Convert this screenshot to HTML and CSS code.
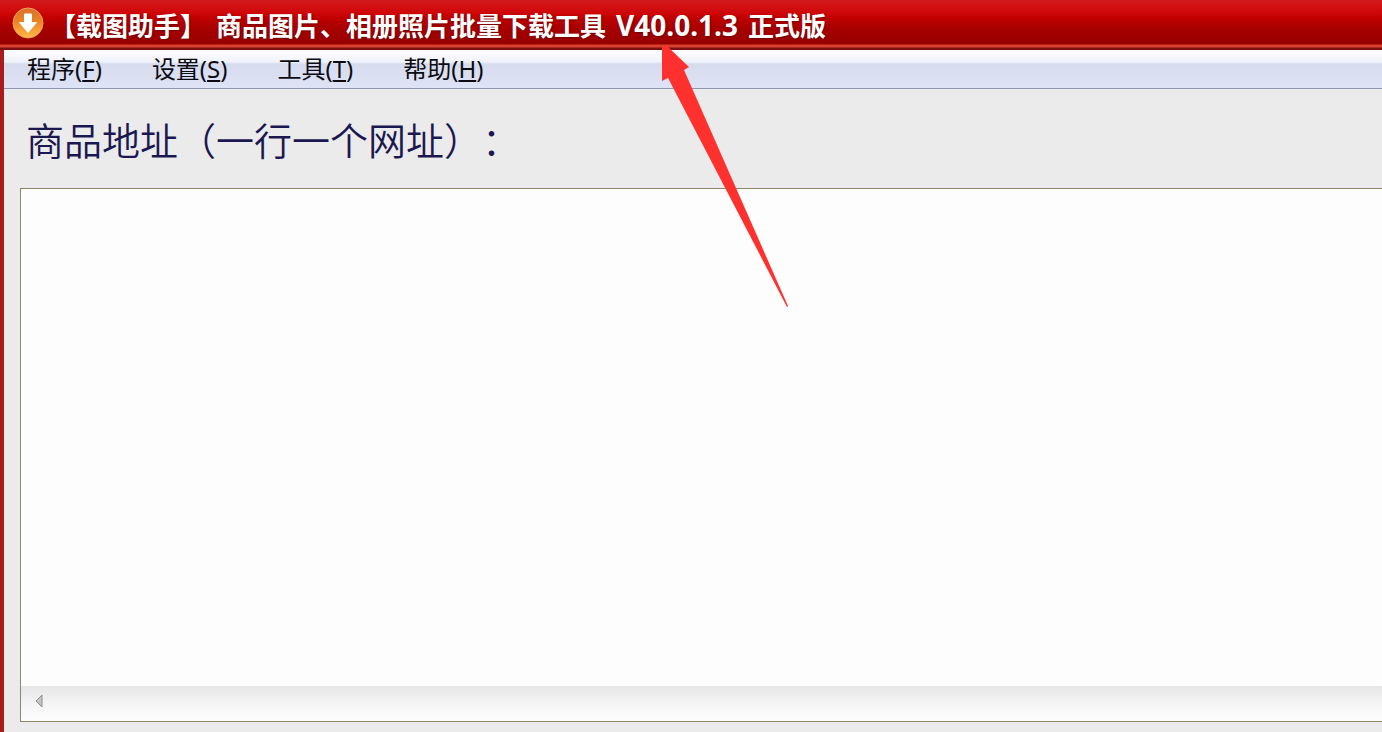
FILE: index.html
```html
<!DOCTYPE html>
<html lang="zh-CN">
  <head>
    <meta charset="UTF-8" />
    <meta name="viewport" content="width=device-width, initial-scale=1.0" />
    <title>【载图助手】 商品图片、相册照片批量下载工具</title>
    <link rel="stylesheet" href="styles.css">
  </head>
  <body>
    <header class="titlebar">
      <svg class="app-icon" viewBox="0 0 32 32" aria-hidden="true">
        <defs>
          <linearGradient id="ball" x1="0" y1="0" x2="0" y2="1">
            <stop offset="0" stop-color="#d9702c" />
            <stop offset="0.45" stop-color="#ec8322" />
            <stop offset="1" stop-color="#ffbc48" />
          </linearGradient>
        </defs>
        <circle cx="16" cy="16" r="15" fill="url(#ball)" stroke="#f3a060" stroke-width="1" />
        <path d="M12.5 7h7v8.500h5L16 25.500l-8.500-10h5z" fill="#fff" stroke="#fff" stroke-width="1" stroke-linejoin="round" />
      </svg>
      <h1 class="title">
        <span>【载图助手】</span>
        <span>商品图片、相册照片批量下载工具</span>
        <span class="version">V40.0.1.3</span>
        <span>正式版</span>
      </h1>
    </header>

    <div class="window">
      <nav class="menubar">
        <button type="button" class="menu-item">程序(<u>F</u>)</button>
        <button type="button" class="menu-item">设置(<u>S</u>)</button>
        <button type="button" class="menu-item">工具(<u>T</u>)</button>
        <button type="button" class="menu-item">帮助(<u>H</u>)</button>
      </nav>

      <main class="content">
        <label class="url-label" for="urls">商品地址（一行一个网址）：</label>
        <div class="url-box">
          <textarea id="urls" class="url-input" wrap="off"></textarea>
          <div class="scrollbar">
            <button type="button" class="scroll-left" aria-label="向左滚动">
              <svg viewBox="0 0 8 14" aria-hidden="true">
                <path d="M7 1v12L1 7z" fill="#c4c4c4" stroke="#8f8f8f" stroke-width="1" />
              </svg>
            </button>
          </div>
        </div>
      </main>
    </div>

    <svg class="arrow" viewBox="0 0 128 262" aria-hidden="true">
      <path d="M1 0H6L28 21L23 24L127 260L126 261L7 32L1 35z" fill="#ff312e" />
    </svg>
  </body>
</html>
```

FILE: styles.css
```css
* {
  box-sizing: border-box;
}
body {
  margin: 0;
  min-height: 100vh;
  display: flex;
  flex-direction: column;
  overflow: hidden;
  background: #ebebeb;
  font-family: "Noto Sans", "Noto Sans CJK SC", sans-serif;
  text-spacing-trim: space-all;
}
button {
  padding: 0;
  border: none;
  background: none;
  color: inherit;
  font: inherit;
}
.titlebar {
  display: flex;
  align-items: center;
  gap: 6px;
  height: 50px;
  padding: 0 12px 4px;
  background: linear-gradient(#d21a1c 0, #d0080a 12px, #c00000 18px, #a80000 28px, #980000 44px, #d8402f 45px, #d8402f 47px, #7a1010 48px, #7a1010 50px);
}
.app-icon {
  flex: none;
  width: 32px;
  height: 32px;
}
.title {
  display: flex;
  align-items: baseline;
  gap: 10px;
  margin: 0;
  padding-top: 4px;
  color: #fff;
  font-size: 26px;
  font-weight: bold;
  line-height: 32px;
  white-space: nowrap;
  text-shadow: 1px 1px 2px #700000;
}
.version {
  font-size: 28px;
}
.window {
  flex: 1;
  display: flex;
  flex-direction: column;
  border-left: 4px solid #a81c1c;
}
.menubar {
  display: flex;
  gap: 50px;
  height: 39px;
  padding: 0 23px;
  border-bottom: 1px solid #9096ae;
  background: linear-gradient(#fff 0, #eff2fb 12px, #d6dcee 14px, #dee4f6 100%);
  color: #0c0c12;
  font-size: 24px;
  line-height: 38px;
}
.content {
  flex: 1;
  display: flex;
  flex-direction: column;
  padding: 22px 0 10px 16px;
}
.url-label {
  padding: 0 6px;
  color: #1b1750;
  font-family: "Noto Sans CJK SC", sans-serif;
  font-size: 38px;
  font-weight: 350;
  line-height: 56px;
  font-kerning: none;
}
.url-box {
  flex: 1;
  display: flex;
  flex-direction: column;
  margin-top: 21px;
  border: 1px solid #8c8868;
  border-right: none;
  background: #fdfdfd;
}
.url-input {
  flex: 1;
  padding: 8px;
  border: none;
  outline: none;
  background: none;
  resize: none;
  overflow: hidden;
  font-family: "Noto Sans CJK SC", sans-serif;
  font-size: 24px;
}
.scrollbar {
  display: flex;
  align-items: center;
  height: 35px;
  padding: 0 14px 6px;
  background: linear-gradient(#e6e6e6, #f7f7f7 60%, #fcfcfc);
}
.scroll-left {
  display: flex;
}
.scroll-left svg {
  width: 8px;
  height: 14px;
}
.arrow {
  position: absolute;
  top: 46px;
  left: 661px;
  width: 128px;
  height: 262px;
  pointer-events: none;
}
```
